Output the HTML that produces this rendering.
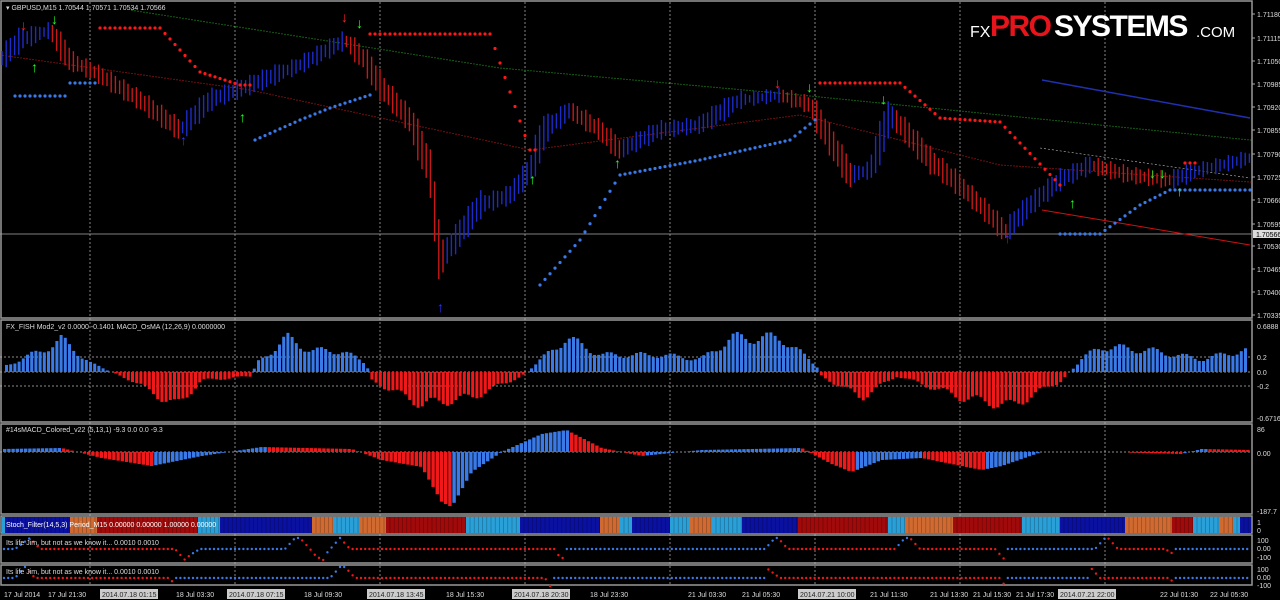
<!DOCTYPE html>
<html><head><meta charset="utf-8"><style>
html,body{margin:0;padding:0;background:#000;width:1280px;height:600px;overflow:hidden}
svg{display:block;font-family:"Liberation Sans",sans-serif}
</style></head><body>
<svg id="s" width="1280" height="600" xmlns="http://www.w3.org/2000/svg">
<rect width="1280" height="600" fill="#000"/>
<g id="g"></g>
<text x="6" y="10" fill="#ddd" font-size="7">▾ GBPUSD,M15  1.70544 1.70571 1.70534 1.70566</text>
<text x="6" y="329" fill="#ddd" font-size="7">FX_FISH Mod2_v2 0.0000 -0.1401  MACD_OsMA (12,26,9) 0.0000000</text>
<text x="6" y="432" fill="#ddd" font-size="7">#14sMACD_Colored_v22 (5,13,1) -9.3 0.0 0.0 -9.3</text>
<text x="6" y="527" fill="#fff" font-size="7">Stoch_Filter(14,5,3) Period_M15 0.00000 0.00000 1.00000 0.00000</text>
<text x="6" y="545" fill="#ddd" font-size="7">Its life Jim, but not as we know it...  0.0010 0.0010</text>
<text x="6" y="574" fill="#ddd" font-size="7">Its life Jim, but not as we know it...  0.0010 0.0010</text>
<text x="970" y="37" fill="#fff" font-size="16">FX</text>
<text x="990" y="36" fill="#e8141c" font-size="30" font-weight="bold" letter-spacing="-1.5">PRO</text>
<text x="1054" y="36" fill="#fff" font-size="30" font-weight="bold" letter-spacing="-1.5">SYSTEMS</text>
<text x="1196" y="37" fill="#fff" font-size="15">.COM</text>
</svg>
<script>
const g=document.getElementById('g');const NS='http://www.w3.org/2000/svg';
function el(t,a){const e=document.createElementNS(NS,t);for(const k in a)e.setAttribute(k,a[k]);g.appendChild(e);return e}
function ln(x1,y1,x2,y2,c,w,d){const o={x1,y1,x2,y2,stroke:c,'stroke-width':w||1};if(d)o['stroke-dasharray']=d;return el('line',o)}
function interp(pts,x){for(let i=0;i<pts.length-1;i++){if(x>=pts[i][0]&&x<=pts[i+1][0]){const t=(x-pts[i][0])/(pts[i+1][0]-pts[i][0]);return pts[i][1]+t*(pts[i+1][1]-pts[i][1])}}return x<pts[0][0]?pts[0][1]:pts[pts.length-1][1]}
const R=1252;
[[0,1,318],[0,320,422],[0,424,514],[0,516,533],[0,535,563],[0,565,585]].forEach(p=>{el('rect',{x:1,y:p[1],width:R-1,height:p[2]-p[1],fill:'none',stroke:'#999','stroke-width':1.5})});
[90,235,380,525,670,815,960,1105].forEach(x=>ln(x,2,x,585,'#bbb',0.7,'2,2'));
ln(0,234,R,234,'#aaa',0.8);
ln(1042,80,1250,118,'#2030b0',1.5);ln(1042,210,1250,245,'#d01010',1);ln(1040,148,1250,178,'#bbb',0.6,'2,2');
let green=[[130,10],[500,68],[800,95],[1250,140]],redma=[[0,55],[250,90],[530,150],[800,115],[1000,165],[1250,182]];
for(let x=0;x<R;x+=3){if(x>=130){el('circle',{cx:x,cy:interp(green,x),r:0.6,fill:'#20a020'})}el('circle',{cx:x,cy:interp(redma,x),r:0.6,fill:'#c01818'})}
const P=[[0,60],[20,40],[50,30],[70,60],[100,75],[140,100],[180,130],[210,100],[250,85],[300,65],[345,40],[365,60],[380,85],[410,120],[430,170],[440,260],[455,240],[480,205],[510,195],[530,170],[545,130],[570,110],[600,130],[620,150],[660,130],[700,125],[740,100],[780,95],[810,105],[830,140],[850,175],[870,170],[890,115],[905,130],[930,160],[960,185],[990,215],[1005,232],[1030,205],[1060,180],[1090,165],[1130,175],[1170,180],[1200,170],[1250,158]];
let prev=interp(P,0);
for(let x=2;x<R-2;x+=4.2){const y=interp(P,x);const up=y<prev-0.5;const h=Math.min(60,6+Math.abs(y-prev)*2.5+((x*7)%11));ln(x,y-h/2,x,y+h/2,up?'#1c2cc8':'#c81818',1.4);prev=y}
function dots(pts,c,x0,x1,step,r){for(let x=x0;x<=x1;x+=step)el('circle',{cx:x,cy:interp(pts,x),r:r||1.6,fill:c})}
dots([[100,28],[160,28],[200,72],[240,85]],'#ff1818',100,250,5);
dots([[370,34],[490,34],[530,150]],'#ff1818',370,535,5);
dots([[820,83],[900,83],[940,118],[1000,122],[1060,185]],'#ff1818',820,1060,5);
dots([[1185,163],[1195,163]],'#ff1818',1185,1195,5);
dots([[15,96],[65,96],[70,83],[98,83]],'#3a7ae8',15,98,5);
dots([[255,140],[300,120],[330,108],[370,95]],'#3a7ae8',255,370,5);
dots([[540,285],[580,240],[620,175],[700,160],[790,140],[815,120]],'#3a7ae8',540,815,5);
dots([[1060,234],[1100,234],[1140,205],[1170,190],[1250,190]],'#3a7ae8',1060,1250,5);
function arr(x,y,c,down){el('text',{x:x-4,y:y,fill:c,'font-size':14,'font-weight':'bold'}).textContent=down?'↓':'↑'}
[[35,72],[243,122],[533,184],[618,168],[1073,208],[1180,196]].forEach(a=>arr(a[0],a[1],'#20ff20',false));
[[55,24],[360,28],[810,92],[884,104],[1153,178],[1163,178]].forEach(a=>arr(a[0],a[1],'#20ff20',true));
[[24,30],[345,22],[778,88]].forEach(a=>arr(a[0],a[1],'#ff2020',true));
[[184,145],[441,312],[1008,243]].forEach(a=>arr(a[0],a[1],'#3030ff',false));
const pl=[['1.71180',14],['1.71115',38],['1.71050',61],['1.70985',84],['1.70920',107],['1.70855',130],['1.70790',154],['1.70725',177],['1.70660',200],['1.70595',224],['1.70530',246],['1.70465',269],['1.70400',292],['1.70335',315]];
pl.forEach(p=>{ln(R,p[1],R+3,p[1],'#aaa',1);el('text',{x:R+5,y:p[1]+3,fill:'#ddd','font-size':7}).textContent=p[0]});
el('rect',{x:R+1,y:230,width:28,height:8,fill:'#ddd'});el('text',{x:R+4,y:237,fill:'#000','font-size':7}).textContent='1.70566';
[['0.6888',327],['0.2',358],['0.0',373],['-0.2',387],['-0.6716',419],['86',430],['0.00',454],['-187.7',512],['1',523],['0',531],['100',541],['0.00',549],['-100',558],['100',570],['0.00',578],['-100',586]].forEach(p=>el('text',{x:R+5,y:p[1]+2,fill:'#ddd','font-size':7}).textContent=p[0]);
ln(0,357,R,357,'#bbb',0.7,'2,2');ln(0,386,R,386,'#bbb',0.7,'2,2');ln(0,372,R,372,'#bbb',0.7,'2,2');
const F=[[5,-8],[40,-25],[60,-38],[90,-10],[110,0],[130,10],[175,40],[200,10],[250,5],[255,-10],[285,-40],[310,-25],[340,-25],[365,-10],[370,10],[420,38],[470,30],[520,5],[530,-5],[565,-40],[600,-20],[660,-20],[700,-15],[730,-40],[780,-40],[815,-8],[820,5],[860,30],[895,5],[905,8],[960,30],[1010,40],[1060,10],[1080,-15],[1100,-30],[1150,-25],[1200,-15],[1240,-25]];
for(let x=5;x<R-4;x+=4.2){const v=interp(F,x)*(0.85+0.15*Math.sin(x*1.3));if(Math.abs(v)<1)continue;el('rect',{x:x,y:v<0?372+v:372,width:3,height:Math.abs(v),fill:v<0?'#3a7ae8':'#f01818'})}
ln(0,452,R,452,'#bbb',0.7,'2,2');
const M=[[0,-3],[60,-4],[100,6],[150,14],[200,4],[260,-5],[350,-3],[380,8],[420,15],[440,50],[450,55],[470,20],[500,0],[540,-18],[565,-22],[600,-4],[640,4],[700,-2],[800,-4],[830,12],[850,20],[880,8],[920,6],[980,18],[1000,14],[1040,0],[1100,0],[1180,2],[1200,-3],[1250,-2]];
for(let x=3;x<R-3;x+=4.2){const v=interp(M,x);const vp=interp(M,x-6);const blue=v<vp;if(Math.abs(v)<0.7)continue;el('rect',{x:x,y:v<0?452+v:452,width:3.4,height:Math.abs(v),fill:blue?'#3a7ae8':'#f01818'})}
const SC={b:'#0a10a0',l:'#2aa0d8',o:'#d06a30',r:'#a00a0a'};
const S=[[2,5,'l'],[5,70,'b'],[70,97,'o'],[97,198,'r'],[198,220,'l'],[220,312,'b'],[312,333,'o'],[333,359,'l'],[359,386,'o'],[386,466,'r'],[466,520,'l'],[520,600,'b'],[600,620,'o'],[620,632,'l'],[632,670,'b'],[670,690,'l'],[690,712,'o'],[712,742,'l'],[742,798,'b'],[798,888,'r'],[888,905,'l'],[905,953,'o'],[953,1022,'r'],[1022,1060,'l'],[1060,1125,'b'],[1125,1172,'o'],[1172,1193,'r'],[1193,1220,'l'],[1220,1233,'o'],[1233,1240,'l'],[1240,1251,'b']];
S.forEach(s=>{el('rect',{x:s[0],y:517,width:s[1]-s[0],height:16,fill:SC[s[2]]});for(let x=s[0]+4;x<s[1];x+=4.2)ln(x,517,x,533,'rgba(0,0,0,0.35)',0.6)});
function jimRow(base,segs){for(let x=4;x<R-3;x+=4.2){let y=base,c='#3a7ae8';for(const s of segs){if(x>=s[0]&&x<s[1]){y=interp(s[2],x);c=s[3]}}el('circle',{cx:x,cy:y,r:1.2,fill:c})}}
const rd='#f01818',bl='#3a7ae8';
jimRow(549,[[15,30,[[15,549],[30,538]],bl],[30,175,[[30,538],[40,549],[175,549]],rd],[175,190,[[175,549],[185,560],[190,555]],rd],[190,200,[[190,555],[200,549]],bl],[285,300,[[285,549],[295,538]],bl],[300,325,[[300,538],[310,549],[315,555],[322,560]],rd],[325,340,[[325,555],[340,538]],bl],[340,555,[[340,538],[350,549],[555,549]],rd],[555,565,[[555,549],[560,558]],rd],[765,778,[[765,549],[775,538]],bl],[778,895,[[778,538],[788,549],[895,549]],rd],[895,910,[[895,549],[905,538]],bl],[910,1005,[[910,538],[920,549],[995,549],[1005,560]],rd],[1095,1108,[[1095,549],[1105,538]],bl],[1108,1175,[[1108,538],[1118,549],[1165,549],[1175,555]],rd]]);
jimRow(578,[[15,25,[[15,578],[25,567]],bl],[25,175,[[25,567],[35,578],[170,578],[175,586]],rd],[330,345,[[330,578],[340,567]],bl],[345,550,[[345,567],[355,578],[545,578],[550,586]],rd],[765,780,[[765,567],[780,578]],rd],[780,1005,[[780,578],[1000,578],[1005,586]],rd],[1090,1175,[[1090,567],[1100,578],[1170,578],[1175,586]],rd]]);
const TT=[[4,'17 Jul 2014'],[48,'17 Jul 21:30'],[176,'18 Jul 03:30'],[304,'18 Jul 09:30'],[446,'18 Jul 15:30'],[590,'18 Jul 23:30'],[688,'21 Jul 03:30'],[742,'21 Jul 05:30'],[870,'21 Jul 11:30'],[930,'21 Jul 13:30'],[973,'21 Jul 15:30'],[1016,'21 Jul 17:30'],[1160,'22 Jul 01:30'],[1210,'22 Jul 05:30']];
TT.forEach(t=>el('text',{x:t[0],y:597,fill:'#ddd','font-size':7}).textContent=t[1]);
[[100,'2014.07.18 01:15'],[227,'2014.07.18 07:15'],[367,'2014.07.18 13:45'],[512,'2014.07.18 20:30'],[798,'2014.07.21 10:00'],[1058,'2014.07.21 22:00']].forEach(t=>{el('rect',{x:t[0],y:589,width:58,height:10,fill:'#ccc'});el('text',{x:t[0]+2,y:597,fill:'#222','font-size':7}).textContent=t[1]});
</script>
</body></html>
